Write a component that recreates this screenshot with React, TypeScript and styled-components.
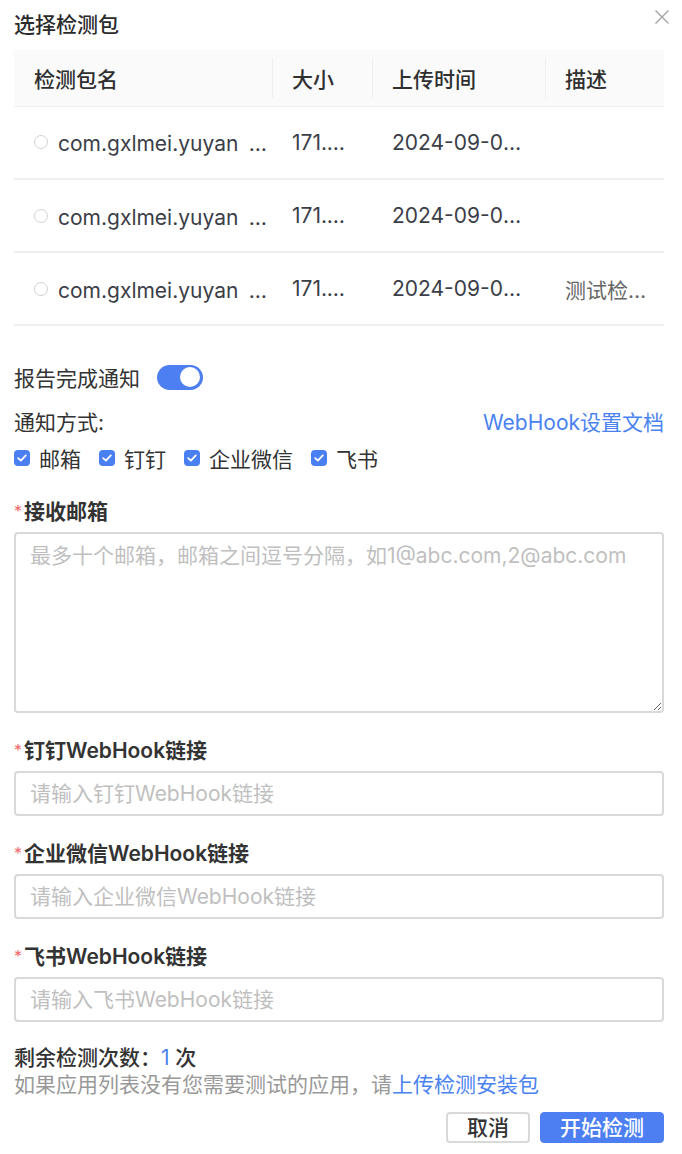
import styled, { createGlobalStyle } from "styled-components";

const GlobalStyle = createGlobalStyle`
  html, body {
    margin: 0;
    padding: 0;
    background: #fff;
  }
  body {
    font-family: Inter, "Noto Sans CJK SC", sans-serif;
    color: #333;
  }
  * {
    box-sizing: border-box;
  }
`;

const packages = [
  { name: "com.gxlmei.yuyan\u2002语言学习", size: "171.52 MB", time: "2024-09-03 14:21:08", desc: "" },
  { name: "com.gxlmei.yuyan\u2002语言学习", size: "171.52 MB", time: "2024-09-02 10:05:44", desc: "" },
  { name: "com.gxlmei.yuyan\u2002语言学习", size: "171.52 MB", time: "2024-09-01 09:12:30", desc: "测试检测包" },
];

const channels = ["邮箱", "钉钉", "企业微信", "飞书"];

const hookFields = [
  { label: "钉钉WebHook链接", placeholder: "请输入钉钉WebHook链接" },
  { label: "企业微信WebHook链接", placeholder: "请输入企业微信WebHook链接" },
  { label: "飞书WebHook链接", placeholder: "请输入飞书WebHook链接" },
];

const App = () => {
  return (
    <Modal>
      <GlobalStyle />
      <Header>
        <Title>选择检测包</Title>
        <Close aria-label="close">
          <svg width="16" height="16" viewBox="0 0 16 16">
            <path d="M1.5 1.5 L14.5 14.5 M14.5 1.5 L1.5 14.5" stroke="#a3a3a3" strokeWidth="1.4" />
          </svg>
        </Close>
      </Header>

      <Table>
        <colgroup>
          <col style={{ width: 258 }} />
          <col style={{ width: 100 }} />
          <col style={{ width: 173 }} />
          <col style={{ width: 119 }} />
        </colgroup>
        <thead>
          <tr>
            <Th>检测包名</Th>
            <Th $divider>大小</Th>
            <Th $divider>上传时间</Th>
            <Th $divider>描述</Th>
          </tr>
        </thead>
        <tbody>
          {packages.map((p, i) => (
            <tr key={i}>
              <Td $right="0px">
                <NameCell>
                  <Radio />
                  <Ellipsis>{p.name}</Ellipsis>
                </NameCell>
              </Td>
              <Td>
                <Ellipsis>{p.size}</Ellipsis>
              </Td>
              <Td>
                <Ellipsis>{p.time}</Ellipsis>
              </Td>
              <Td $muted $right="10px">
                <Ellipsis>{p.desc}</Ellipsis>
              </Td>
            </tr>
          ))}
        </tbody>
      </Table>

      <NotifyRow>
        <span>报告完成通知</span>
        <Switch>
          <Knob />
        </Switch>
      </NotifyRow>

      <MethodRow>
        <span>通知方式:</span>
        <Link href="#">WebHook设置文档</Link>
      </MethodRow>

      <CheckRow>
        {channels.map((c) => (
          <CheckItem key={c}>
            <CheckBox>
              <svg width="10" height="8" viewBox="0 0 10 8">
                <path d="M1.2 4.1 L3.9 6.6 L8.8 1.4" stroke="#fff" strokeWidth="1.8" fill="none" strokeLinecap="round" strokeLinejoin="round" />
              </svg>
            </CheckBox>
            {c}
          </CheckItem>
        ))}
      </CheckRow>

      <Field $first>
        <Label>接收邮箱</Label>
        <TextArea placeholder="最多十个邮箱，邮箱之间逗号分隔，如1@abc.com,2@abc.com" />
      </Field>

      {hookFields.map((f) => (
        <Field key={f.label}>
          <Label>{f.label}</Label>
          <Input placeholder={f.placeholder} />
        </Field>
      ))}

      <Remain>
        剩余检测次数：<Count>1</Count> 次
      </Remain>
      <Hint>
        如果应用列表没有您需要测试的应用，请<Link href="#">上传检测安装包</Link>
      </Hint>

      <Footer>
        <Button>取消</Button>
        <Button $primary>开始检测</Button>
      </Footer>
    </Modal>
  );
};

const Modal = styled.div`
  width: 682px;
  padding: 0 18px 10px 14px;
  font-size: 21px;
`;

const Header = styled.div`
  height: 50px;
  display: flex;
  align-items: flex-start;
  justify-content: space-between;
`;

const Title = styled.div`
  font-size: 21px;
  font-weight: 500;
  line-height: 50px;
  color: #2b2b2b;
`;

const Close = styled.button`
  border: none;
  background: none;
  padding: 0;
  margin: 9px -6px 0 0;
  cursor: pointer;
`;

const Table = styled.table`
  width: 650px;
  table-layout: fixed;
  border-collapse: collapse;
`;

const Th = styled.th<{ $divider?: boolean }>`
  position: relative;
  height: 56px;
  padding: 0 20px;
  text-align: left;
  font-weight: 500;
  font-size: 21px;
  color: #2f2f2f;
  background: #fafafa;
  border-bottom: 1px solid #efefef;

  &::before {
    content: "";
    display: ${(p) => (p.$divider ? "block" : "none")};
    position: absolute;
    left: 0;
    top: 50%;
    width: 1px;
    height: 40px;
    transform: translateY(-50%);
    background: #eeeeee;
  }
`;

const Td = styled.td<{ $muted?: boolean; $right?: string }>`
  height: 73px;
  padding: 0 ${(p) => p.$right ?? "18px"} 0 20px;
  border-bottom: 2px solid #efefef;
  color: ${(p) => (p.$muted ? "#666" : "#3b3e47")};
  font-size: 21px;
`;

const NameCell = styled.div`
  display: flex;
  align-items: center;
  gap: 10px;
  min-width: 0;
`;

const Radio = styled.span`
  flex: none;
  width: 14px;
  height: 14px;
  border: 1.5px solid #d2d2d2;
  border-radius: 50%;
  background: #fff;
`;

const Ellipsis = styled.div`
  overflow: hidden;
  white-space: nowrap;
  text-overflow: ellipsis;
`;

const NotifyRow = styled.div`
  margin-top: 38px;
  display: flex;
  align-items: center;
  gap: 17px;
  height: 26px;
  color: #333;
`;

const Switch = styled.span`
  width: 46px;
  height: 25px;
  border-radius: 13px;
  background: #4d7ff2;
  display: flex;
  align-items: center;
  justify-content: flex-end;
  padding-right: 3px;
`;

const Knob = styled.span`
  width: 20px;
  height: 20px;
  border-radius: 50%;
  background: #fff;
`;

const MethodRow = styled.div`
  margin-top: 18px;
  height: 26px;
  display: flex;
  align-items: center;
  justify-content: space-between;
  color: #333;
`;

const Link = styled.a`
  color: #4a82f0;
  text-decoration: none;
`;

const CheckRow = styled.div`
  margin-top: 11px;
  height: 26px;
  display: flex;
  align-items: center;
  gap: 18px;
`;

const CheckItem = styled.label`
  display: flex;
  align-items: center;
  gap: 9px;
  color: #333;
`;

const CheckBox = styled.span`
  width: 16px;
  height: 16px;
  border-radius: 4px;
  background: #4a7ff1;
  display: flex;
  align-items: center;
  justify-content: center;
`;

const Field = styled.div<{ $first?: boolean }>`
  margin-top: ${(p) => (p.$first ? "26px" : "23px")};
  display: flex;
  flex-direction: column;
  gap: 6px;
`;

const Label = styled.div`
  line-height: 28px;
  font-weight: 600;
  color: #333;

  &::before {
    content: "*";
    color: #f06a6a;
    font-weight: 400;
    font-size: 16px;
    margin-right: 2px;
    vertical-align: 2px;
  }
`;

const controlBase = `
  width: 100%;
  border: 2px solid #d9d9d9;
  border-radius: 4px;
  font-family: Inter, "Noto Sans CJK SC", sans-serif;
  font-size: 21px;
  color: #333;
  outline: none;
  background: #fff;
  &::placeholder {
    color: #bfbfbf;
  }
`;

const TextArea = styled.textarea`
  ${controlBase}
  height: 181px;
  padding: 7px 14px;
  line-height: 30px;
  resize: vertical;
  display: block;
`;

const Input = styled.input`
  ${controlBase}
  height: 45px;
  padding: 0 14px;
`;

const Remain = styled.div`
  margin-top: 23px;
  line-height: 26px;
  font-weight: 500;
  color: #333;
`;

const Count = styled.span`
  color: #4a82f0;
  font-weight: 400;
`;

const Hint = styled.div`
  line-height: 27px;
  color: #999;
`;

const Footer = styled.div`
  margin-top: 14px;
  display: flex;
  justify-content: flex-end;
  gap: 10px;
`;

const Button = styled.button<{ $primary?: boolean }>`
  height: 31px;
  padding: 0 19px;
  border-radius: 4px;
  border: ${(p) => (p.$primary ? "1px solid #4d7ff2" : "2px solid #d9d9d9")};
  background: ${(p) => (p.$primary ? "#4d7ff2" : "#fff")};
  color: ${(p) => (p.$primary ? "#fff" : "#333")};
  font-family: Inter, "Noto Sans CJK SC", sans-serif;
  font-size: 21px;
  font-weight: 500;
  line-height: 1;
  cursor: pointer;
`;

export default App;
